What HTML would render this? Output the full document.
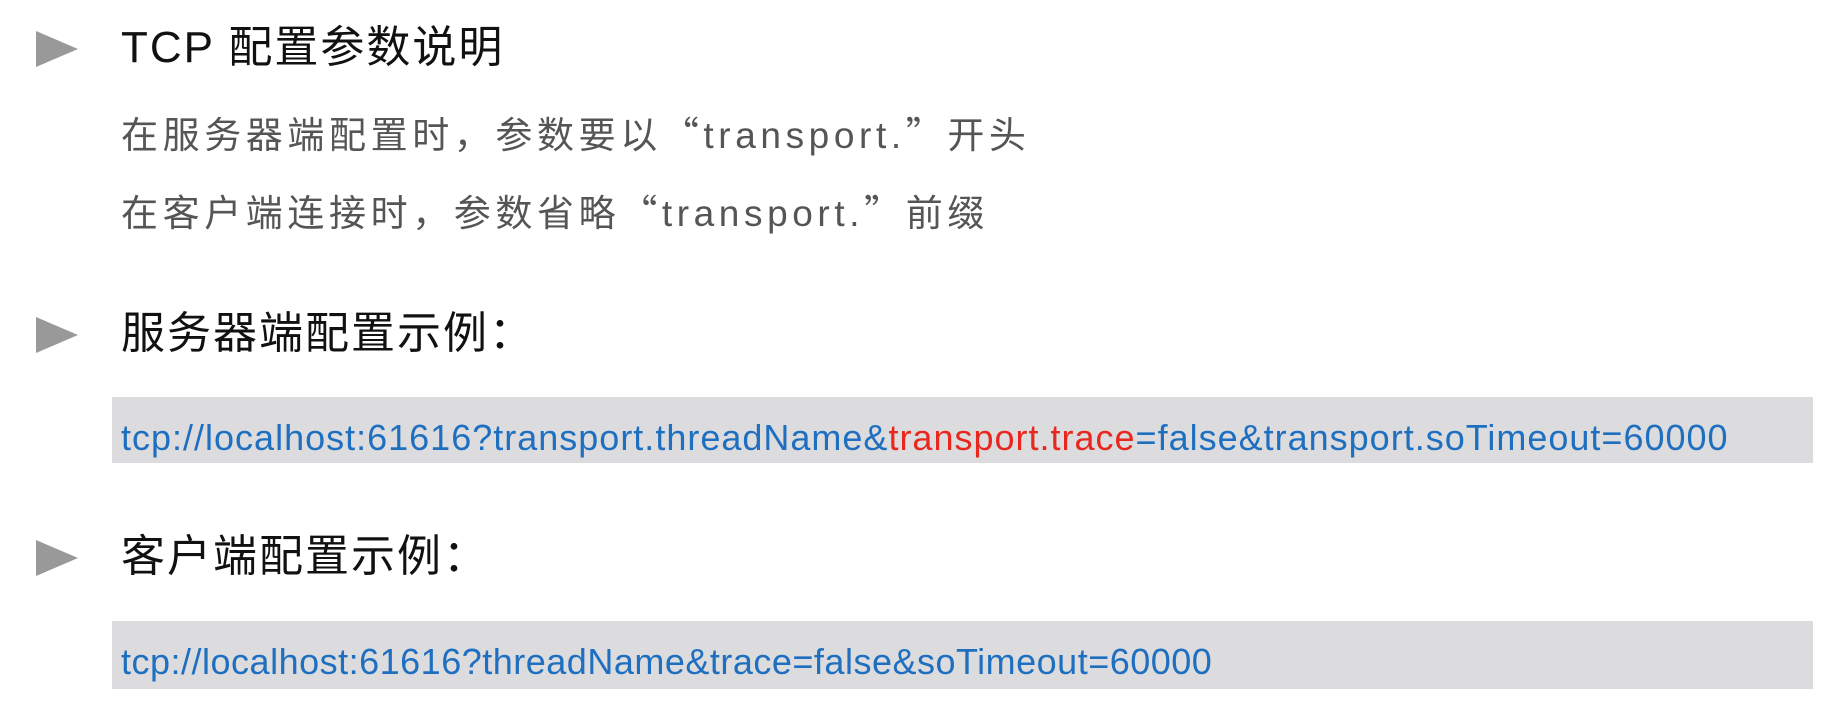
<!DOCTYPE html>
<html><head><meta charset="utf-8"><style>
body{margin:0;width:1831px;height:716px;background:#fff;position:relative;overflow:hidden;font-family:"Liberation Sans","Noto Sans CJK SC",sans-serif;}
.tri{position:absolute;left:36px;width:0;height:0;border-top:18px solid transparent;border-bottom:18px solid transparent;border-left:42px solid #999;}
.h{position:absolute;left:121px;font-size:44px;color:#111;line-height:1;letter-spacing:2px;}
.p{position:absolute;left:121px;font-size:37px;color:#555;line-height:1;letter-spacing:4.6px;}
.q{font-family:"Noto Sans CJK SC",sans-serif;}
.box{position:absolute;left:112px;width:1701px;background:#dcdcde;}
.code{position:absolute;left:121px;font-size:36px;color:#1f6fc0;line-height:1;white-space:nowrap;letter-spacing:1px;}
.r{color:#e8281e;}
</style></head><body>
<div class="tri" style="top:31px"></div>
<div class="h" style="top:26px">TCP 配置参数说明</div>
<div class="p" style="top:114px">在服务器端配置时，参数要以<span class="q">“</span>transport.<span class="q">”</span>开头</div>
<div class="p" style="top:192px">在客户端连接时，参数省略<span class="q">“</span>transport.<span class="q">”</span>前缀</div>
<div class="tri" style="top:317px"></div>
<div class="h" style="top:312px">服务器端配置示例：</div>
<div class="box" style="top:397px;height:66px"></div>
<div class="code" style="top:420px">tcp://localhost:61616?transport.threadName&amp;<span class="r">transport.trace</span>=false&amp;transport.soTimeout=60000</div>
<div class="tri" style="top:540px"></div>
<div class="h" style="top:535px">客户端配置示例：</div>
<div class="box" style="top:621px;height:68px"></div>
<div class="code" style="top:644px;letter-spacing:0.5px">tcp://localhost:61616?threadName&amp;trace=false&amp;soTimeout=60000</div>
</body></html>
